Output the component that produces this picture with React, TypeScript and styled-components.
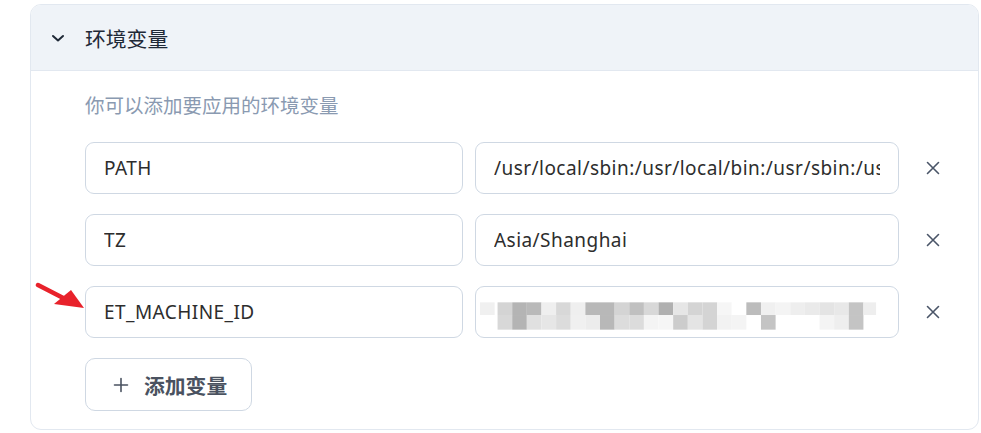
import React from "react";
import styled, { createGlobalStyle } from "styled-components";

const Global = createGlobalStyle`
  html, body { margin: 0; padding: 0; background: #ffffff; }
  body { font-family: "Noto Sans", "Noto Sans CJK SC", sans-serif; }
`;

const Page = styled.div`
  padding: 4px 2px 0 30px;
  width: 981px;
  box-sizing: border-box;
`;

const Card = styled.section`
  width: 949px;
  border: 1px solid #e2e8f0;
  border-radius: 11px;
  overflow: hidden;
  background: #fff;
  box-sizing: border-box;
`;

const Header = styled.div`
  height: 66px;
  display: flex;
  align-items: center;
  gap: 20px;
  padding-left: 20px;
  background: #eff3f8;
  border-bottom: 1px solid #e2e8f0;
  box-sizing: border-box;
`;

const Title = styled.span`
  font-family: "Noto Sans CJK SC", sans-serif;
  font-size: 20.8px;
  color: #1f2937;
`;

const Body = styled.div`
  padding: 22px 0 18px 54px;
  position: relative;
`;

const Hint = styled.p`
  margin: 0 0 25px;
  font-family: "Noto Sans CJK SC", sans-serif;
  font-size: 19.5px;
  line-height: 24px;
  color: #8a9ab1;
`;

const Row = styled.div`
  display: grid;
  grid-template-columns: 378px 424px 44px;
  column-gap: 12px;
  margin-bottom: 20px;
  position: relative;
`;

const Field = styled.div`
  height: 52px;
  border: 1px solid #cfd8e3;
  border-radius: 9px;
  display: flex;
  align-items: center;
  padding: 0 18px;
  box-sizing: border-box;
  font-family: "Noto Sans", sans-serif;
  font-size: 19px;
  letter-spacing: 0.45px;
  color: #2d2d2d;
  white-space: nowrap;
  overflow: hidden;
`;

const FieldText = styled.span`
  flex: 1;
  min-width: 0;
  overflow: hidden;
`;

const RemoveBtn = styled.button`
  border: 0;
  background: transparent;
  display: flex;
  align-items: center;
  justify-content: center;
  padding: 0;
  color: #4a5568;
  cursor: pointer;
`;

const AddBtn = styled.button`
  height: 53px;
  width: 167px;
  border: 1px solid #cfd8e3;
  border-radius: 10px;
  background: #fff;
  display: flex;
  align-items: center;
  gap: 15px;
  padding: 0 0 0 27px;
  box-sizing: border-box;
  font-family: "Noto Sans CJK SC", sans-serif;
  font-weight: 700;
  font-size: 20.8px;
  color: #4a5260;
`;

const Arrow = styled.svg`
  position: absolute;
  left: -50px;
  top: -4px;
`;

const Mosaic = styled.svg`
  display: block;
  margin: 8px 0 0 -14px;
`;

const row1: [number, string][] = [
  [480, "#f0f0f0"], [498, "#d4d4d4"], [513, "#b4b4b4"], [528, "#b9b9b9"], [543, "#efefef"],
  [558, "#d8d8d8"], [573, "#efefef"], [588, "#b8b8b8"], [603, "#b8b8b8"], [618, "#d4d4d4"],
  [633, "#c0c0c0"], [648, "#d8d8d8"], [663, "#b0b0b0"], [678, "#e6e6e6"], [693, "#d4d4d4"],
  [708, "#d4d4d4"], [723, "#f6f6f6"], [738, "#ffffff"], [753, "#bcbcbc"], [768, "#f0f0f0"],
  [783, "#f4f4f4"], [798, "#eeeeee"], [813, "#eaeaea"], [828, "#e4e4e4"], [843, "#e8e8e8"],
  [858, "#c4c4c4"], [873, "#eeeeee"],
];
const row2: [number, string][] = [
  [498, "#d8d8d8"], [513, "#b4b4b4"], [528, "#e0e0e0"], [543, "#e6e6e6"], [558, "#dcdcdc"],
  [573, "#f0f0f0"], [588, "#ececec"], [603, "#b8b8b8"], [618, "#dcdcdc"], [633, "#dcdcdc"],
  [648, "#f4f4f4"], [663, "#f6f6f6"], [678, "#cccccc"], [693, "#e4e4e4"], [708, "#d4d4d4"],
  [723, "#f2f2f2"], [738, "#f4f4f4"], [768, "#c4c4c4"], [828, "#f4f4f4"], [843, "#eeeeee"],
  [858, "#c4c4c4"],
];

const Blurred = () => (
  <Mosaic width="410" height="30" viewBox="480 301 410 30">
    {row1.map(([x, c]) => (
      <rect key={"a" + x} x={x} y={302} width={x === 873 ? 13 : 15} height={13} fill={c} />
    ))}
    {row2.map(([x, c]) => (
      <rect key={"b" + x} x={x} y={315} width={15} height={15} fill={c} />
    ))}
  </Mosaic>
);

const XIcon = () => (
  <svg width="16" height="16" viewBox="0 0 16 16" fill="none" stroke="currentColor" strokeWidth="1.6" strokeLinecap="round">
    <path d="M2.5 2.5l11 11M13.5 2.5l-11 11" />
  </svg>
);

const vars = [
  { k: "PATH", v: "/usr/local/sbin:/usr/local/bin:/usr/sbin:/usr/bin:/sbin:/bin" },
  { k: "TZ", v: "Asia/Shanghai" },
  { k: "ET_MACHINE_ID", v: null },
];

export default function App() {
  return (
    <>
      <Global />
      <Page>
        <Card>
          <Header>
            <svg width="14" height="14" viewBox="0 0 14 14" fill="none" stroke="#1f2937" strokeWidth="2" strokeLinecap="round" strokeLinejoin="round">
              <path d="M2 5l5 4.5L12 5" />
            </svg>
            <Title>环境变量</Title>
          </Header>
          <Body>
            <Hint>你可以添加要应用的环境变量</Hint>
            {vars.map((r, i) => (
              <Row key={r.k}>
                {i === 2 && (
                  <Arrow width="52" height="30" viewBox="0 0 52 30">
                    <path d="M3 3 L36 20" stroke="#e8222b" strokeWidth="4.5" strokeLinecap="round" />
                    <path d="M19 22 L36 8 L49 26 Z" fill="#e8222b" />
                  </Arrow>
                )}
                <Field>
                  <FieldText>{r.k}</FieldText>
                </Field>
                <Field>{r.v ? <FieldText>{r.v}</FieldText> : <Blurred />}</Field>
                <RemoveBtn aria-label="删除">
                  <XIcon />
                </RemoveBtn>
              </Row>
            ))}
            <AddBtn>
              <svg width="16" height="16" viewBox="0 0 16 16" stroke="#4a5260" strokeWidth="1.6" strokeLinecap="round">
                <path d="M8 1.5v13M1.5 8h13" />
              </svg>
              添加变量
            </AddBtn>
          </Body>
        </Card>
      </Page>
    </>
  );
}
